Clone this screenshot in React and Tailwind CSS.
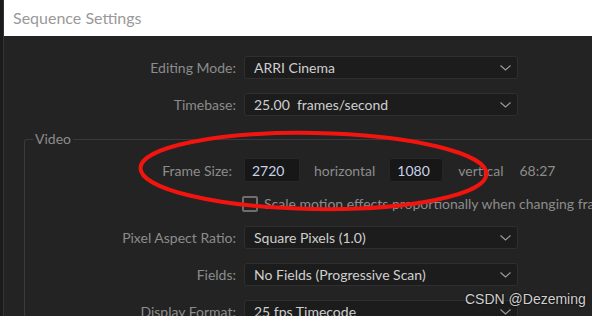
import React from "react";

const labelCls = "text-right text-[#8c8c8c] shrink-0";

const Chevron = () => (
  <svg width="11" height="6" viewBox="0 0 11 6" className="shrink-0">
    <polyline points="0.5,0.5 5.5,5 10.5,0.5" fill="none" stroke="#9a9a9a" strokeWidth="1.2" />
  </svg>
);

const Dropdown = ({ value }) => (
  <div className="ml-[8px] flex h-[23px] w-[274px] items-center justify-between rounded-[3px] border border-[#2f2f2f] bg-[#1c1c1c] pl-[9px] pr-[6px] text-[#cfcfcf]">
    <span className="whitespace-pre">{value}</span>
    <Chevron />
  </div>
);

const Row = ({ label, labelW, children, className = "" }) => (
  <div className={"flex items-center " + className}>
    <div className={labelCls} style={{ width: labelW }}>
      {label}
    </div>
    {children}
  </div>
);

const NumInput = ({ value, w }) => (
  <div
    className="flex h-[24px] items-center rounded-[3px] border border-[#262626] bg-[#171717] pl-[7px] text-[#c6d4e8]"
    style={{ width: w }}
  >
    {value}
  </div>
);

export default function App() {
  return (
    <div className="relative flex h-[316px] w-[592px] overflow-hidden bg-[#1b1b1b] font-['Lato',sans-serif] text-[14px]">
      <div className="w-[4px] shrink-0 border-r border-[#333333] bg-[#1b1b1b]" />
      <div className="flex flex-1 flex-col">
        <div className="flex h-[36px] shrink-0 items-center bg-white pl-[9px] text-[16px] text-[#999999]">
          Sequence Settings
        </div>
        <div className="flex-1 bg-[#232323] pt-[20px]">
          <Row label="Editing Mode:" labelW={232}>
            <Dropdown value="ARRI Cinema" />
          </Row>
          <Row label="Timebase:" labelW={232} className="mt-[14px]">
            <Dropdown value="25.00  frames/second" />
          </Row>

          <fieldset className="ml-[20px] mt-[14px] rounded-tl-[3px] border-l border-t border-[#3a3a3a]">
            <legend className="ml-[8px] px-[2px] leading-[18px] text-[#8c8c8c]">Video</legend>

            <Row label="Frame Size:" labelW={207} className="mt-[10px]">
              <div className="ml-[12px] flex items-center">
                <NumInput value="2720" w={56} />
                <span className="ml-[14px] text-[#8c8c8c]">horizontal</span>
                <div className="ml-[14px]">
                  <NumInput value="1080" w={54} />
                </div>
                <span className="ml-[15px] text-[#8c8c8c]">vertical</span>
                <span className="ml-[16px] text-[#8c8c8c]">68:27</span>
              </div>
            </Row>

            <div className="mt-[13px] flex h-[17px] items-center pl-[217px]">
              <div className="h-[16px] w-[16px] shrink-0 rounded-[2px] border-2 border-[#6e6e6e]" />
              <span className="ml-[6px] whitespace-nowrap text-[#8c8c8c]">
                Scale motion effects proportionally when changing frame size
              </span>
            </div>

            <Row label="Pixel Aspect Ratio:" labelW={211} className="mt-[14px]">
              <Dropdown value="Square Pixels (1.0)" />
            </Row>
            <Row label="Fields:" labelW={211} className="mt-[14px]">
              <Dropdown value="No Fields (Progressive Scan)" />
            </Row>
            <Row label="Display Format:" labelW={211} className="mt-[14px]">
              <Dropdown value="25 fps Timecode" />
            </Row>
          </fieldset>
        </div>
      </div>

      <svg className="pointer-events-none absolute left-0 top-0" width="592" height="316">
        <ellipse
          cx="313.5"
          cy="171"
          rx="173"
          ry="38"
          fill="none"
          stroke="#f2140f"
          strokeWidth="4"
          transform="rotate(1 313.5 171)"
        />
      </svg>

      <div className="absolute left-[465px] top-[289px] font-['Liberation_Sans',sans-serif] text-[14px] text-[#d0d0d0] [text-shadow:0_0_2px_#000]">
        CSDN @Dezeming
      </div>
    </div>
  );
}
